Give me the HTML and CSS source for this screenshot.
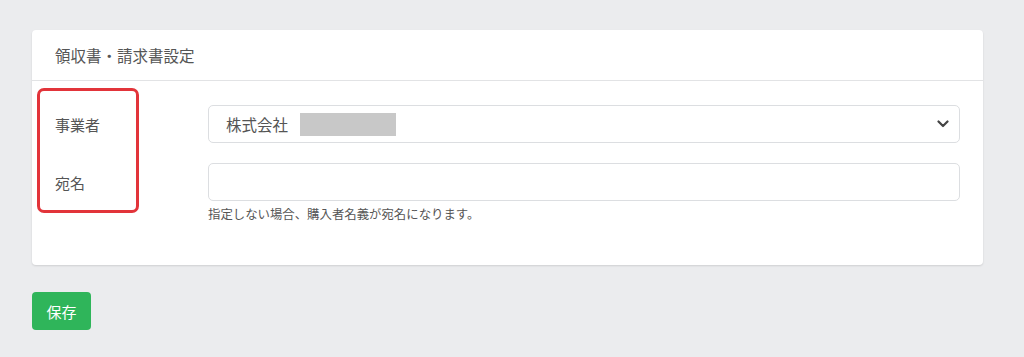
FILE: index.html
```html
<!DOCTYPE html>
<html lang="ja">
<head>
    <meta charset="UTF-8">
    <meta name="viewport" content="width=device-width, initial-scale=1.0">
    <title>領収書・請求書設定</title>
    <link rel="stylesheet" href="styles.css">
</head>
<body>
    <div class="page">
        <div class="card">
            <div class="card-head">領収書・請求書設定</div>
            <div class="card-body">
                <div class="mark"></div>
                <div class="row">
                    <label class="label">事業者</label>
                    <div class="field">
                        <div class="select">
                            <span class="value">株式会社<span class="blur"></span></span>
                            <svg class="chev" width="12" height="8" viewBox="0 0 12 8"><path d="M1.5 1.5 L6 6 L10.5 1.5" fill="none" stroke="#444" stroke-width="2.2" stroke-linecap="round" stroke-linejoin="round"/></svg>
                        </div>
                    </div>
                </div>
                <div class="row">
                    <label class="label">宛名</label>
                    <div class="field">
                        <div class="input"></div>
                        <div class="hint">指定しない場合、購入者名義が宛名になります。</div>
                    </div>
                </div>
            </div>
        </div>
        <button class="save">保存</button>
    </div>
</body>
</html>
```

FILE: styles.css
```css
*{
    box-sizing: border-box;
}
body{
    margin: 0;
    background-color: #ebecee;
    font-family: "Noto Sans CJK JP", "Noto Sans", sans-serif;
    color: #555;
}
.page{
    padding: 30px 41px 0 32px;
}
.card{
    background-color: #fff;
    border-radius: 4px;
    box-shadow: 0 1px 2px rgba(0,0,0,0.12);
    height: 235px;
}
.card-head{
    height: 51px;
    padding: 0 23px;
    display: flex;
    align-items: center;
    font-size: 15.5px;
    border-bottom: 1px solid #e2e3e5;
}
.card-body{
    position: relative;
    padding: 24px 23px 0 23px;
}
.row{
    display: flex;
    align-items: flex-start;
    margin-bottom: 20px;
}
.label{
    width: 153px;
    height: 38px;
    display: flex;
    align-items: center;
    font-size: 15px;
    color: #555;
}
.field{
    flex: 1;
}
.select, .input{
    height: 38px;
    border: 1px solid #dcdee1;
    border-radius: 5px;
    background-color: #fff;
}
.select{
    display: flex;
    align-items: center;
    justify-content: space-between;
    padding: 0 10px 0 17px;
}
.value{
    display: flex;
    align-items: center;
    font-size: 15.5px;
    color: #555;
}
.blur{
    display: inline-block;
    width: 96px;
    height: 23px;
    margin-left: 12px;
    background-color: #c8c8c8;
}
.hint{
    margin-top: 4px;
    font-size: 12.4px;
    color: #555;
}
.mark{
    position: absolute;
    left: 5px;
    top: 7px;
    width: 102px;
    height: 125px;
    border: 3px solid #e2343a;
    border-radius: 7px;
}
.save{
    margin-top: 27px;
    width: 59px;
    height: 38px;
    border: none;
    border-radius: 4px;
    background-color: #2fb55a;
    color: #fff;
    font-family: "Noto Sans CJK JP", sans-serif;
    font-size: 15px;
}
```
